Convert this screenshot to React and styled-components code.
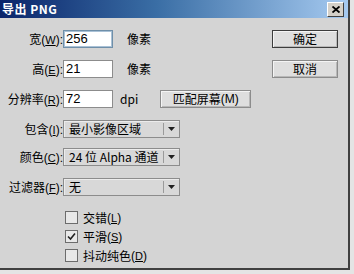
import React from "react";
import styled, { createGlobalStyle } from "styled-components";

const GlobalStyle = createGlobalStyle`
  html, body {
    margin: 0;
    padding: 0;
    background: #e4e4e4;
  }
`;

const Window = styled.div`
  width: 348px;
  height: 268px;
  background: #d4d4d4;
  border-right: 2px solid #404040;
  border-bottom: 2px solid #404040;
  font-family: "Noto Sans CJK SC", "Liberation Sans", sans-serif;
  font-size: 12px;
  color: #000;
  display: flex;
  flex-direction: column;
  overflow: hidden;
`;

const TitleBar = styled.div`
  height: 18px;
  display: flex;
  align-items: center;
  justify-content: space-between;
  padding: 0 4px 0 2px;
  background: linear-gradient(to right, #0a246a 0%, #3a6ea5 45%, #a6caf0 100%);
`;

const Title = styled.div`
  color: #fff;
  font-weight: bold;
  font-size: 12px;
  letter-spacing: 0.5px;
  line-height: 18px;
`;

const CloseBtn = styled.div`
  width: 15px;
  height: 13px;
  background: #d4d0c8;
  border: 1px solid;
  border-color: #fff #404040 #404040 #fff;
  display: flex;
  align-items: center;
  justify-content: center;
`;

const Body = styled.div`
  flex: 1;
  display: flex;
  padding-top: 12px;
`;

const Form = styled.div`
  width: 272px;
  display: flex;
  flex-direction: column;
`;

const Row = styled.div`
  display: flex;
  align-items: center;
  height: 18px;
  margin-top: ${p => p.mt || 0}px;
`;

const Label = styled.div`
  width: 63px;
  text-align: right;
  white-space: nowrap;
  line-height: 18px;
`;

const Key = styled.span`
  text-decoration: underline;
  font-family: "Liberation Sans", sans-serif;
  font-size: 11px;
`;

const Paren = styled.span`
  font-family: "Liberation Sans", sans-serif;
  font-size: 12px;
`;

const TextInput = styled.div`
  box-sizing: border-box;
  width: 50px;
  height: 18px;
  background: #fff;
  border: 1px solid ${p => (p.focused ? "#6f8fa9" : "#8c8c8c")};
  box-shadow: ${p => (p.focused ? "inset 0 0 0 1px #a9c1d6" : "none")};
  font-family: "Liberation Sans", sans-serif;
  font-size: 13px;
  line-height: 16px;
  padding-left: 2px;
`;

const Unit = styled.div`
  margin-left: ${p => p.ml}px;
  line-height: 18px;
`;

const Button = styled.div`
  box-sizing: border-box;
  width: ${p => p.w}px;
  height: 18px;
  margin-left: ${p => p.ml || 0}px;
  background: #dedede;
  border: 1px solid ${p => (p.primary ? "#3c3c3c" : "#8c8c8c")};
  box-shadow: inset 1px 1px 0 #f4f4f4, inset -1px -1px 0 #b8b8b8;
  display: flex;
  align-items: center;
  justify-content: center;
  line-height: 16px;
  white-space: nowrap;
`;

const Select = styled.div`
  box-sizing: border-box;
  width: 117px;
  height: 18px;
  border: 1px solid #8c8c8c;
  background: #d8d8d8;
  box-shadow: inset 1px 1px 0 #ececec;
  display: flex;
  align-items: center;
`;

const SelectText = styled.div`
  flex: 1;
  padding-left: 5px;
  white-space: nowrap;
  overflow: hidden;
  line-height: 16px;
`;

const Arrow = styled.div`
  width: 15px;
  height: 12px;
  border-left: 1px solid #9a9a9a;
  display: flex;
  align-items: center;
  justify-content: center;
`;

const Checks = styled.div`
  display: flex;
  flex-direction: column;
  margin-top: 12px;
  padding-left: 65px;
`;

const CheckRow = styled.div`
  display: flex;
  align-items: center;
  height: 19px;
`;

const Box = styled.div`
  box-sizing: border-box;
  width: 13px;
  height: 13px;
  border: 1px solid #6c6c6c;
  background: #e8e8e8;
  margin-right: 5px;
  display: flex;
  align-items: center;
  justify-content: center;
`;

const Side = styled.div`
  display: flex;
  flex-direction: column;
  gap: 12px;
`;

const L = ({ text, k }) => (
  <Label>
    {text}
    <Paren>(</Paren>
    <Key>{k}</Key>
    <Paren>):</Paren>
  </Label>
);

const Check = ({ text, k, checked }) => (
  <CheckRow>
    <Box>
      {checked && (
        <svg width="9" height="9" viewBox="0 0 9 9">
          <path d="M1 4.5 L3.5 7 L8 1.5" fill="none" stroke="#202020" strokeWidth="1.6" />
        </svg>
      )}
    </Box>
    {text}
    <Paren>(</Paren>
    <Key>{k}</Key>
    <Paren>)</Paren>
  </CheckRow>
);

const DropArrow = () => (
  <Arrow>
    <svg width="7" height="4" viewBox="0 0 7 4">
      <path d="M0 0 H7 L3.5 4 Z" fill="#202020" />
    </svg>
  </Arrow>
);

export default function App() {
  return (
    <>
      <GlobalStyle />
      <Window>
        <TitleBar>
          <Title>导出 PNG</Title>
          <CloseBtn>
            <svg width="8" height="7" viewBox="0 0 8 7">
              <path d="M0.5 0.5 L7.5 6.5 M7.5 0.5 L0.5 6.5" stroke="#000" strokeWidth="1.8" />
            </svg>
          </CloseBtn>
        </TitleBar>
        <Body>
          <Form>
            <Row>
              <L text="宽" k="W" />
              <TextInput focused>256</TextInput>
              <Unit ml={14}>像素</Unit>
            </Row>
            <Row mt={12}>
              <L text="高" k="E" />
              <TextInput>21</TextInput>
              <Unit ml={14}>像素</Unit>
            </Row>
            <Row mt={12}>
              <L text="分辨率" k="R" />
              <TextInput>72</TextInput>
              <Unit ml={7}>dpi</Unit>
              <Button w={91} ml={22}>
                匹配屏幕<Paren>(M)</Paren>
              </Button>
            </Row>
            <Row mt={12}>
              <L text="包含" k="I" />
              <Select>
                <SelectText>最小影像区域</SelectText>
                <DropArrow />
              </Select>
            </Row>
            <Row mt={10}>
              <L text="颜色" k="C" />
              <Select>
                <SelectText>24 位 Alpha 通道</SelectText>
                <DropArrow />
              </Select>
            </Row>
            <Row mt={12}>
              <L text="过滤器" k="F" />
              <Select>
                <SelectText>无</SelectText>
                <DropArrow />
              </Select>
            </Row>
            <Checks>
              <Check text="交错" k="L" />
              <Check text="平滑" k="S" checked />
              <Check text="抖动纯色" k="D" />
            </Checks>
          </Form>
          <Side>
            <Button w={66} primary>确定</Button>
            <Button w={66}>取消</Button>
          </Side>
        </Body>
      </Window>
    </>
  );
}
